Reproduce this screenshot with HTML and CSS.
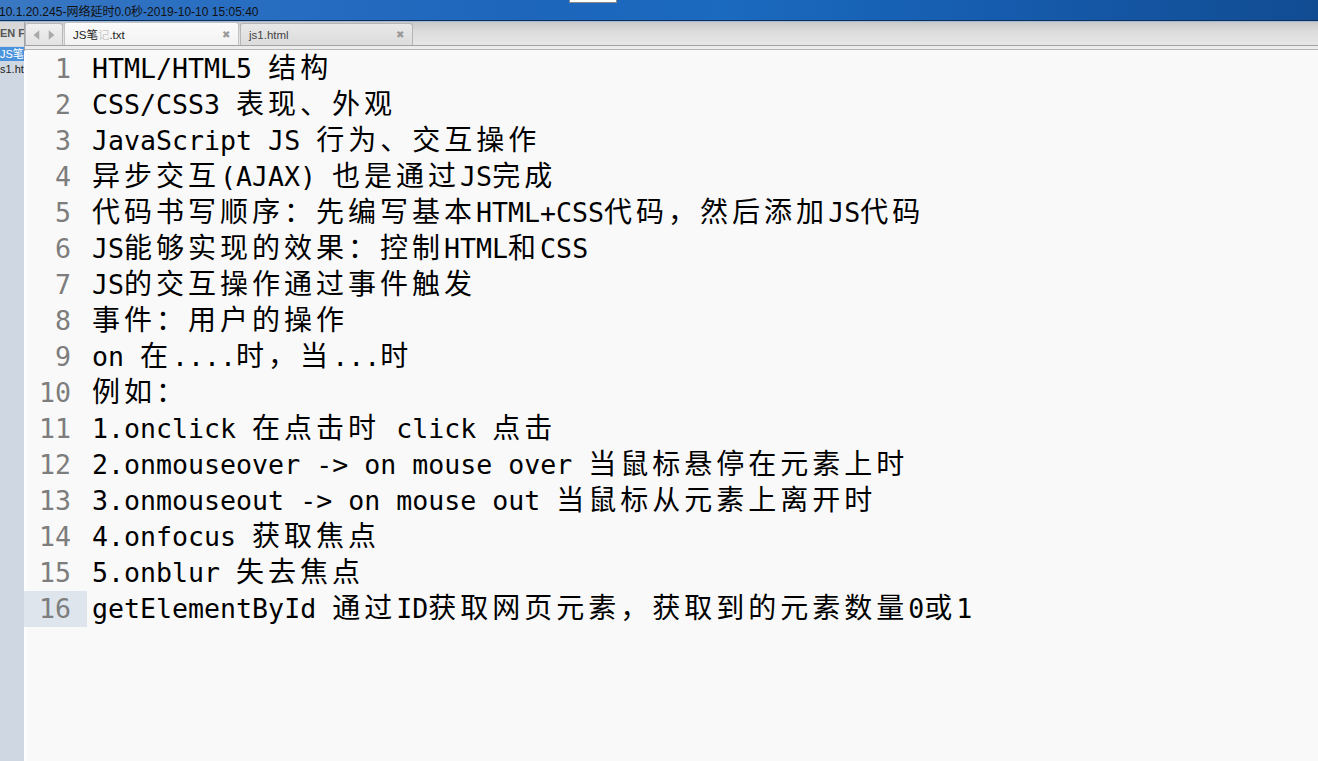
FILE: index.html
```html
<!DOCTYPE html>
<html lang="zh">
<head>
<meta charset="utf-8">
<title>JS笔记.txt</title>
<link rel="stylesheet" href="styles.css">
</head>
<body>
<div class="window">
  <div class="titlebar">
    <span class="title-text">10.1.20.245-网络延时0.0秒-2019-10-10 15:05:40</span>
    <span class="title-box"></span>
  </div>
  <div class="body">
    <aside class="sidebar">
      <div class="side-head">EN FI</div>
      <div class="side-item active"><span>JS笔记</span></div>
      <div class="side-item"><span>s1.ht</span></div>
    </aside>
    <div class="main">
      <div class="tabbar">
        <div class="nav">
          <svg width="38" height="22" viewBox="0 0 38 22"><path d="M14 6 L8 11 L14 16 Z" fill="#a9a9a9"/><path d="M24 6 L30 11 L24 16 Z" fill="#a9a9a9"/></svg>
        </div>
        <div class="tab active"><span class="tab-name">JS笔<span class="faded">记</span>.txt</span><span class="close">✖</span></div>
        <div class="tab"><span class="tab-name">js1.html</span><span class="close">✖</span></div>
      </div>
      <div class="editor">
        <div class="line"><span class="num">1</span><span class="txt">HTML/HTML5 <span class="c">结构</span></span></div>
        <div class="line"><span class="num">2</span><span class="txt">CSS/CSS3 <span class="c">表现、外观</span></span></div>
        <div class="line"><span class="num">3</span><span class="txt">JavaScript JS <span class="c">行为、交互操作</span></span></div>
        <div class="line"><span class="num">4</span><span class="txt"><span class="c">异步交互</span>(AJAX) <span class="c">也是通过</span>JS<span class="c">完成</span></span></div>
        <div class="line"><span class="num">5</span><span class="txt"><span class="c">代码书写顺序：先编写基本</span>HTML+CSS<span class="c">代码，然后添加</span>JS<span class="c">代码</span></span></div>
        <div class="line"><span class="num">6</span><span class="txt">JS<span class="c">能够实现的效果：控制</span>HTML<span class="c">和</span>CSS</span></div>
        <div class="line"><span class="num">7</span><span class="txt">JS<span class="c">的交互操作通过事件触发</span></span></div>
        <div class="line"><span class="num">8</span><span class="txt"><span class="c">事件：用户的操作</span></span></div>
        <div class="line"><span class="num">9</span><span class="txt">on <span class="c">在</span>....<span class="c">时，当</span>...<span class="c">时</span></span></div>
        <div class="line"><span class="num">10</span><span class="txt"><span class="c">例如：</span></span></div>
        <div class="line"><span class="num">11</span><span class="txt">1.onclick <span class="c">在点击时</span> click <span class="c">点击</span></span></div>
        <div class="line"><span class="num">12</span><span class="txt">2.onmouseover -&gt; on mouse over <span class="c">当鼠标悬停在元素上时</span></span></div>
        <div class="line"><span class="num">13</span><span class="txt">3.onmouseout -&gt; on mouse out <span class="c">当鼠标从元素上离开时</span></span></div>
        <div class="line"><span class="num">14</span><span class="txt">4.onfocus <span class="c">获取焦点</span></span></div>
        <div class="line"><span class="num">15</span><span class="txt">5.onblur <span class="c">失去焦点</span></span></div>
        <div class="line current"><span class="num">16</span><span class="txt">getElementById <span class="c">通过</span>ID<span class="c">获取网页元素，获取到的元素数量</span>0<span class="c">或</span>1</span></div>
      </div>
    </div>
  </div>
</div>
</body>
</html>
```

FILE: styles.css
```css
html, body {
  margin: 0;
  padding: 0;
}
body {
  width: 1318px;
  height: 761px;
  overflow: hidden;
  background: #f9f9f9;
  font-family: "Liberation Sans", "Noto Sans CJK SC", sans-serif;
}
.window {
  display: flex;
  flex-direction: column;
  height: 761px;
}
.titlebar {
  position: relative;
  height: 20px;
  flex: none;
  background: linear-gradient(90deg, #3a78c2 0%, #2a6fc2 15%, #1d66bc 40%, #1a6abf 55%, #165cae 75%, #114c92 100%);
  border-bottom: 1px solid #0d2f5a;
  box-shadow: 0 1px 0 #9fb9d8;
  display: flex;
  align-items: center;
}
.title-text {
  font-size: 12px;
  color: #111;
  margin-left: -1px;
  white-space: nowrap;
}
.title-box {
  position: absolute;
  left: 569px;
  top: 0;
  width: 46px;
  height: 2px;
  background: #fff;
  border: 1px solid #8a8a8a;
  border-top: none;
}
.body {
  flex: 1;
  display: flex;
  margin-top: 1px;
  min-height: 0;
}
.sidebar {
  width: 24px;
  flex: none;
  background: #cfd8e2;
  border-right: 1px solid #9ea3a9;
  overflow: hidden;
}
.side-head {
  height: 24px;
  background: linear-gradient(#d6d6d6, #e4e4e4);
  font-size: 11px;
  font-weight: bold;
  color: #555;
  line-height: 15px;
  padding-top: 4px;
  box-sizing: border-box;
  white-space: nowrap;
}
.side-item {
  height: 14px;
  font-size: 11px;
  line-height: 14px;
  white-space: nowrap;
  color: #222;
  overflow: hidden;
  margin-top: 1px;
}
.side-item.active {
  background: #4b92dc;
  color: #fff;
}
.main {
  flex: 1;
  display: flex;
  flex-direction: column;
  min-width: 0;
}
.tabbar {
  height: 23px;
  flex: none;
  display: flex;
  align-items: flex-end;
  background: linear-gradient(#c9c9c9, #dcdcdc 40%, #e6e6e6);
  border-bottom: 1px solid #a2a2a2;
  box-shadow: 0 3px 0 #ececec, 0 4px 0 #b5b5b5;
  margin-bottom: 5px;
}
.nav {
  width: 38px;
  height: 22px;
  border: 1px solid #b8b8b8;
  border-bottom: none;
  border-radius: 3px 3px 0 0;
  background: linear-gradient(#f0f0f0, #e2e2e2);
  box-sizing: border-box;
  display: flex;
}
.tab {
  width: 173px;
  height: 22px;
  box-sizing: border-box;
  display: flex;
  align-items: center;
  justify-content: space-between;
  padding: 0 8px;
  font-size: 11.5px;
  color: #444;
  background: linear-gradient(#e8e8e8, #dcdcdc);
  border: 1px solid #b5b5b5;
  border-bottom: none;
  border-radius: 3px 3px 0 0;
  margin-left: 1px;
}
.tab.active {
  background: linear-gradient(#fbfbfb, #f2f2f2);
  border-color: #c4c4c4;
  color: #222;
  width: 175px;
  height: 23px;
}
.tab-name {
  white-space: nowrap;
}
.faded {
  color: #c9c9c9;
}
.close {
  font-size: 10px;
  color: #9a9a9a;
}
.editor {
  flex: 1;
  background: #f9f9f9;
  border-left: 3px solid #fdfdfd;
  margin-left: -1px;
  font-family: "DejaVu Sans Mono", "Liberation Mono", monospace;
  font-size: 26.6px;
  color: #000;
}
.line {
  display: flex;
  height: 36px;
  line-height: 36px;
  white-space: pre;
}
.num {
  width: 63px;
  flex: none;
  box-sizing: border-box;
  text-align: right;
  padding-right: 16px;
  margin-left: -3px;
  color: #7d7d7d;
}
.txt {
  margin-left: 5px;
}
.line.current .num {
  background: #dee5ed;
}
.c {
  font-family: "Noto Sans CJK SC", sans-serif;
  font-size: 28px;
  letter-spacing: 4px;
  line-height: 29px;
}
```
